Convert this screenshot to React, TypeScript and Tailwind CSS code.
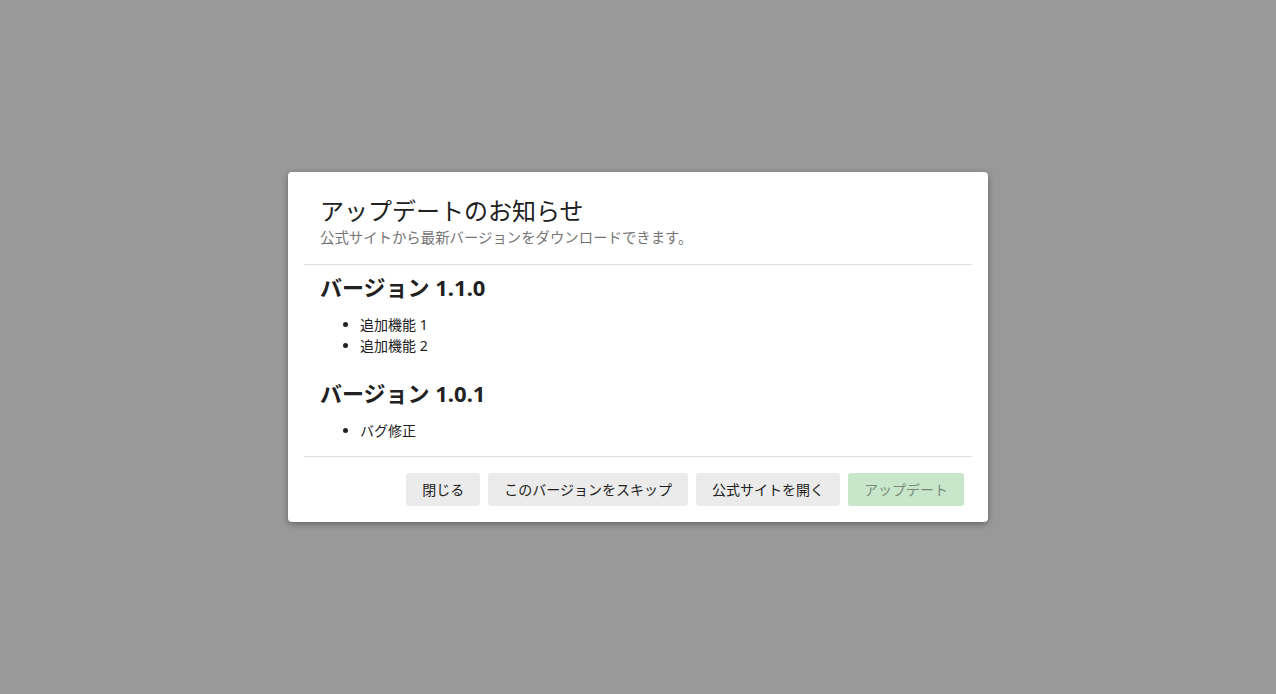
import React from "react";

const font = { fontFamily: '"Noto Sans", "Noto Sans CJK JP", sans-serif' };

export default function App() {
  return (
    <div
      className="w-[1276px] h-[694px] bg-[#999999] flex items-center justify-center"
      style={font}
    >
      <div className="w-[700px] bg-white rounded-[4px] shadow-[0_2px_6px_rgba(0,0,0,0.35)] p-4 flex flex-col">
        <div className="px-4 pt-[8px] pb-[14px] border-b border-[#e0e0e0]">
          <h2 className="text-[24px] leading-[30px] text-[#212121] font-normal">
            アップデートのお知らせ
          </h2>
          <p className="text-[14.4px] leading-[24px] text-[#757575]">
            公式サイトから最新バージョンをダウンロードできます。
          </p>
        </div>
        <div className="px-4 pt-[8px] pb-[15px] border-b border-[#e0e0e0] text-[#212121]">
          <h3 className="text-[22px] leading-[28px] font-bold">バージョン 1.1.0</h3>
          <ul className="list-disc pl-[40px] mt-[13px] text-[14px] leading-[21px]">
            <li>追加機能 1</li>
            <li>追加機能 2</li>
          </ul>
          <h3 className="text-[22px] leading-[28px] font-bold mt-[23px]">バージョン 1.0.1</h3>
          <ul className="list-disc pl-[40px] mt-[13px] text-[14px] leading-[21px]">
            <li>バグ修正</li>
          </ul>
        </div>
        <div className="flex justify-end gap-2 pt-4 px-2">
          <button className="h-[33px] px-4 rounded-[3px] bg-[#ebebeb] text-[14px] text-[#212121]">
            閉じる
          </button>
          <button className="h-[33px] px-4 rounded-[3px] bg-[#ebebeb] text-[14px] text-[#212121]">
            このバージョンをスキップ
          </button>
          <button className="h-[33px] px-4 rounded-[3px] bg-[#ebebeb] text-[14px] text-[#212121]">
            公式サイトを開く
          </button>
          <button className="h-[33px] px-4 rounded-[3px] bg-[#c8e6c9] text-[14px] text-[#7a8a7b]">
            アップデート
          </button>
        </div>
      </div>
    </div>
  );
}
